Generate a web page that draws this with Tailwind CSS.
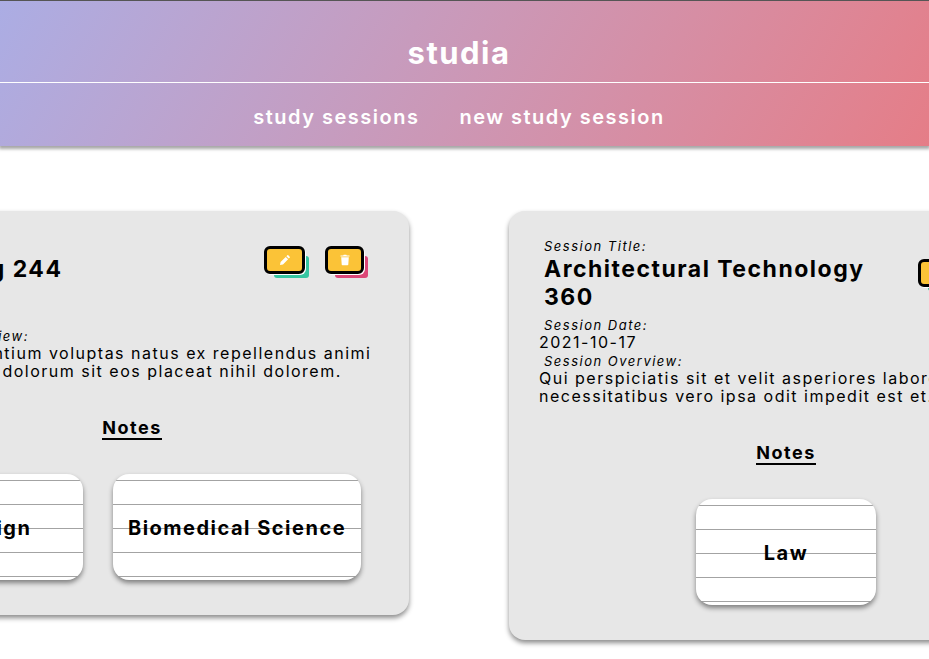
<!DOCTYPE html>
<html lang="en">
<head>
<meta charset="utf-8">
<title>studia</title>
<script src="https://cdn.jsdelivr.net/npm/@tailwindcss/browser@4"></script>
</head>
<body class="min-h-screen overflow-x-hidden bg-white font-['Inter','Liberation_Sans',sans-serif] text-base leading-[18px] tracking-[1.5px] text-black">
<header class="border-t border-[#555] bg-linear-120 from-[#abade4] to-[#e57d87] font-semibold text-white shadow-[0_2px_3px_1px_rgba(0,0,0,0.35)]">
  <h1 class="border-b border-white pt-8 pr-[11px] pb-[9px] text-center text-[31px] leading-10 font-bold">studia</h1>
  <nav class="flex justify-center gap-10 pt-[22px] pr-[11px] pb-[17px] text-xl leading-6">
    <a href="#sessions">study sessions</a>
    <a href="#new">new study session</a>
  </nav>
</header>
<main id="sessions" class="flex items-start justify-center gap-[100px] pt-[65px] pr-[11px] pb-5">
  <article class="w-[554px] shrink-0 rounded-2xl bg-[#e7e7e7] px-[30px] pt-[27px] pb-[35px] shadow-[0_3px_5px_rgba(0,0,0,0.45)]">
    <div class="flex min-h-12 items-start justify-between pr-[15px] pl-[5px]">
      <div>
        <p class="mb-px text-[13px] leading-4 italic">Session Title:</p>
        <h2 class="text-[23px] leading-7 font-bold">Teaching 244</h2>
      </div>
      <div class="mb-1 flex gap-5 self-center">
        <button aria-label="Edit session" class="flex h-7 w-[41px] items-center justify-center rounded-md border-3 border-black bg-[#fbc337] text-white shadow-[1px_1px_0_#fff,7px_7px_0_-3px_#36c5a1]">
          <svg class="size-3" viewBox="0 0 12 12" fill="currentColor"><path d="M1 11l.6-3L6.700 2.900l2.400 2.400L4 10.400zM7.400 2.200l.9-.9q.5-.5 1 0l1.400 1.400q.5.500 0 1l-.9.900z"/></svg>
        </button>
        <button aria-label="Delete session" class="flex h-7 w-[39px] items-center justify-center rounded-md border-3 border-black bg-[#fbc337] text-white shadow-[1px_1px_0_#fff,7px_7px_0_-3px_#dc4878]">
          <svg class="size-3" viewBox="0 0 12 12" fill="currentColor"><path d="M1.500 1.500h2.700l.5-.7h2.600l.5.700h2.700v1h-9zM2.200 3.300h7.600l-.5 7.200q0 .7-.8.700h-5q-.8 0-.8-.7z"/></svg>
        </button>
      </div>
    </div>
    <p class="mt-1.5 pl-[5px] text-[13px] leading-4 italic">Session Date:</p>
    <p>2021-10-04</p>
    <p class="mt-0.5 pl-[5px] text-[13px] leading-4 italic">Session Overview:</p>
    <p>Ut qui laudantium voluptas natus ex repellendus animi<br>consequatur dolorum sit eos placeat nihil dolorem.</p>
    <h3 class="mx-auto mt-[37px] w-fit border-b-2 border-black text-lg leading-[21px] font-bold">Notes</h3>
    <div class="mt-[34px] flex justify-center gap-[30px] text-xl leading-6 font-bold">
      <a href="#design" class="flex h-[106px] min-w-[180px] items-center justify-center rounded-2xl bg-white bg-[linear-gradient(#a3a3a3_1px,transparent_1px)] bg-[length:100%_24px] bg-[position:0_6px] px-[15px] pt-0.5 shadow-[0_3px_5px_rgba(0,0,0,0.45)]">Design</a>
      <a href="#biomedical" class="flex h-[106px] min-w-[180px] items-center justify-center rounded-2xl bg-white bg-[linear-gradient(#a3a3a3_1px,transparent_1px)] bg-[length:100%_24px] bg-[position:0_6px] px-[15px] pt-0.5 shadow-[0_3px_5px_rgba(0,0,0,0.45)]">Biomedical Science</a>
    </div>
  </article>
  <article class="w-[554px] shrink-0 rounded-2xl bg-[#e7e7e7] px-[30px] pt-[27px] pb-[35px] shadow-[0_3px_5px_rgba(0,0,0,0.45)]">
    <div class="flex min-h-12 items-start justify-between pr-[15px] pl-[5px]">
      <div>
        <p class="mb-px text-[13px] leading-4 italic">Session Title:</p>
        <h2 class="text-[23px] leading-7 font-bold">Architectural Technology<br>360</h2>
      </div>
      <div class="mb-1 flex gap-5 self-center">
        <button aria-label="Edit session" class="flex h-7 w-[41px] items-center justify-center rounded-md border-3 border-black bg-[#fbc337] text-white shadow-[1px_1px_0_#fff,7px_7px_0_-3px_#36c5a1]">
          <svg class="size-3" viewBox="0 0 12 12" fill="currentColor"><path d="M1 11l.6-3L6.700 2.900l2.400 2.400L4 10.400zM7.400 2.200l.9-.9q.5-.5 1 0l1.400 1.400q.5.500 0 1l-.9.900z"/></svg>
        </button>
        <button aria-label="Delete session" class="flex h-7 w-[39px] items-center justify-center rounded-md border-3 border-black bg-[#fbc337] text-white shadow-[1px_1px_0_#fff,7px_7px_0_-3px_#dc4878]">
          <svg class="size-3" viewBox="0 0 12 12" fill="currentColor"><path d="M1.500 1.500h2.700l.5-.7h2.600l.5.700h2.700v1h-9zM2.200 3.300h7.600l-.5 7.200q0 .7-.8.700h-5q-.8 0-.8-.7z"/></svg>
        </button>
      </div>
    </div>
    <p class="mt-1.5 pl-[5px] text-[13px] leading-4 italic">Session Date:</p>
    <p>2021-10-17</p>
    <p class="mt-0.5 pl-[5px] text-[13px] leading-4 italic">Session Overview:</p>
    <p>Qui perspiciatis sit et velit asperiores labore<br>necessitatibus vero ipsa odit impedit est et.</p>
    <h3 class="mx-auto mt-[37px] w-fit border-b-2 border-black text-lg leading-[21px] font-bold">Notes</h3>
    <div class="mt-[34px] flex justify-center gap-[30px] text-xl leading-6 font-bold">
      <a href="#law" class="flex h-[106px] min-w-[180px] items-center justify-center rounded-2xl bg-white bg-[linear-gradient(#a3a3a3_1px,transparent_1px)] bg-[length:100%_24px] bg-[position:0_6px] px-[15px] pt-0.5 shadow-[0_3px_5px_rgba(0,0,0,0.45)]">Law</a>
    </div>
  </article>
</main>
</body>
</html>
